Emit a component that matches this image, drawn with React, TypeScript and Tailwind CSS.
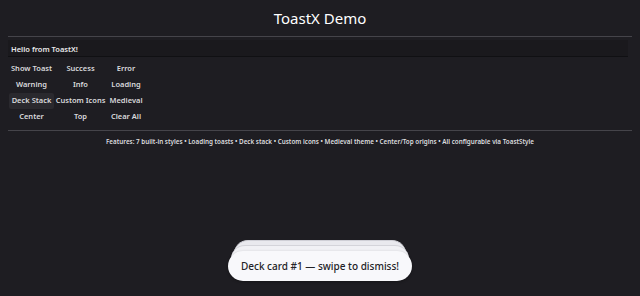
import React from "react";

const buttons = [
  "Show Toast", "Success", "Error",
  "Warning", "Info", "Loading",
  "Deck Stack", "Custom Icons", "Medieval",
  "Center", "Top", "Clear All",
];

export default function App() {
  return (
    <div
      className="w-[640px] h-[296px] bg-[#1e1d22] text-[#e8e8ea] overflow-hidden relative"
      style={{ fontFamily: '"Noto Sans", "Open Sans", sans-serif' }}
    >
      <div className="px-2">
        <div className="h-[37px] flex items-center justify-center text-[15px] text-white border-b border-[#45444a]">
          ToastX Demo
        </div>
        <div className="mt-[3px] mr-[4px] h-[17px] bg-[#1a191d] border-b border-[#101013] flex items-center pt-[4px] px-[3px] text-[7.5px] font-semibold">
          Hello from ToastX!
        </div>
        <div className="grid grid-cols-[47px_51px_40px] mt-[4px] text-[7.5px] font-semibold text-[#d9d9dc]">
          {buttons.map((b) => (
            <div
              key={b}
              className={`h-[16px] flex items-center justify-center rounded-[2px] ${b === "Deck Stack" ? "bg-[#2a292e] mx-[1px]" : ""}`}
            >
              {b}
            </div>
          ))}
        </div>
        <div className="mt-[5px] border-t border-[#45444a] h-[22px] flex items-center justify-center pt-[1px] text-[6.3px] font-semibold text-[#dcdcdf]">
          Features: 7 built-in styles • Loading toasts • Deck stack • Custom icons • Medieval theme • Center/Top origins • All configurable via ToastStyle
        </div>
      </div>
      <div className="absolute left-[228px] top-[240px] w-[184px] flex flex-col">
        <div className="mx-[6px] h-[20px] rounded-t-[14px] bg-[#e9e9ee] border-t border-[#cfcfd6]" />
        <div className="mx-[3px] -mt-[15px] h-[20px] rounded-t-[14px] bg-[#f1f1f5] border-t border-[#d4d4da]" />
        <div className="-mt-[14px] h-[30px] rounded-[15px] bg-[#f8f8fb] flex items-center justify-center text-[10px] font-medium text-[#232227] shadow-[0_1px_3px_rgba(0,0,0,0.3)]">
          Deck card #1 — swipe to dismiss!
        </div>
      </div>
    </div>
  );
}
